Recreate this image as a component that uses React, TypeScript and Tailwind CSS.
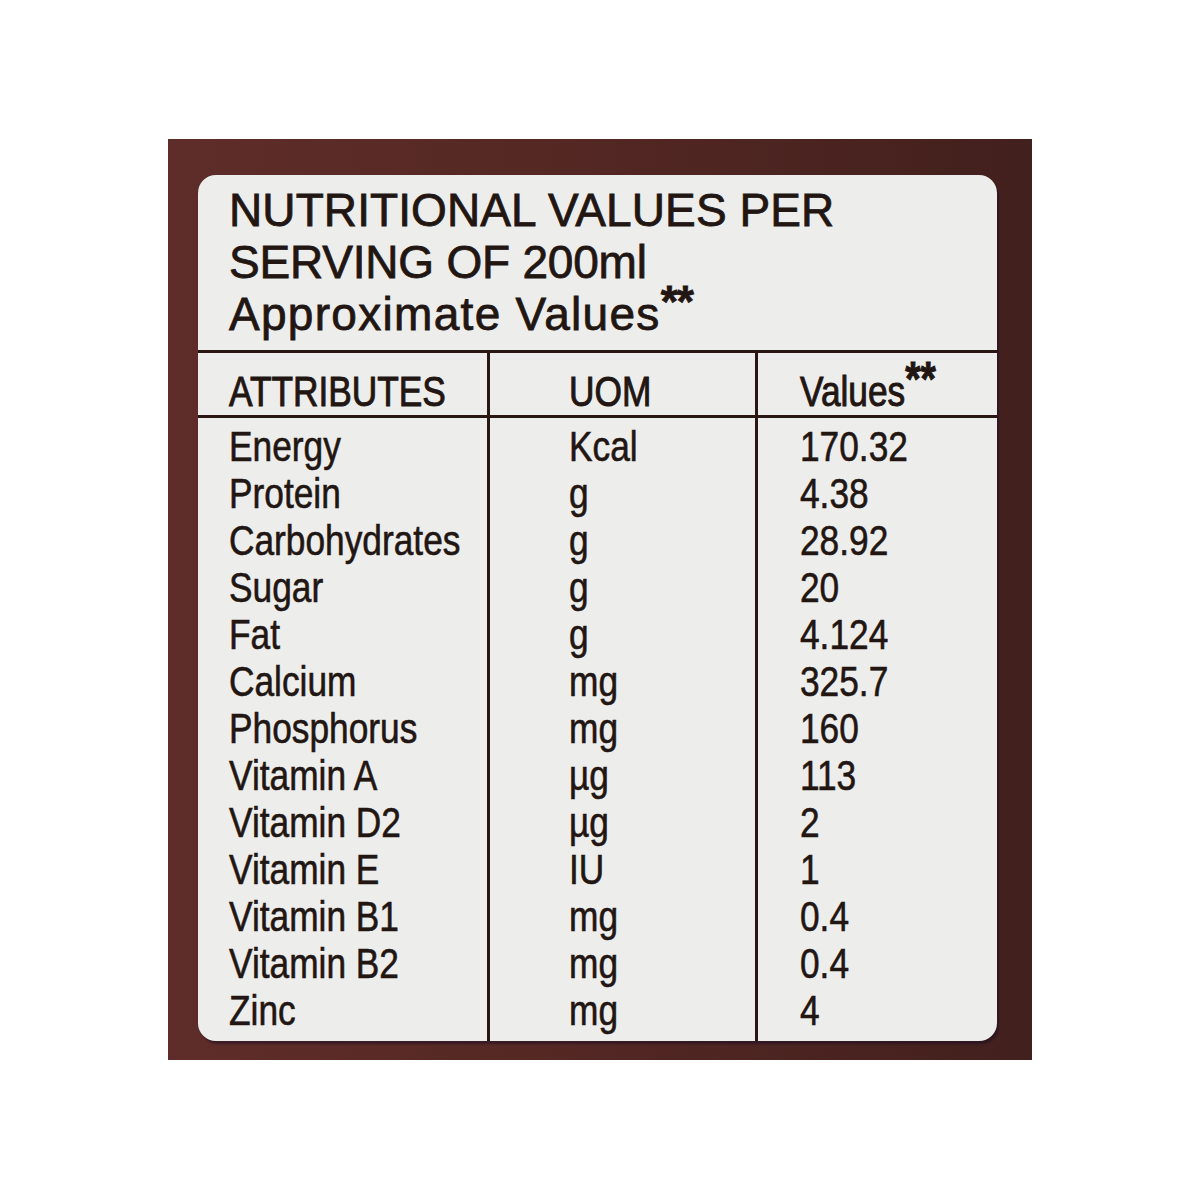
const rows = [
  ["Energy", "Kcal", "170.32"],
  ["Protein", "g", "4.38"],
  ["Carbohydrates", "g", "28.92"],
  ["Sugar", "g", "20"],
  ["Fat", "g", "4.124"],
  ["Calcium", "mg", "325.7"],
  ["Phosphorus", "mg", "160"],
  ["Vitamin A", "µg", "113"],
  ["Vitamin D2", "µg", "2"],
  ["Vitamin E", "IU", "1"],
  ["Vitamin B1", "mg", "0.4"],
  ["Vitamin B2", "mg", "0.4"],
  ["Zinc", "mg", "4"],
]

// no narrow face installed, so the table text is squeezed horizontally
function Column({
  title,
  values,
  className,
  padClass,
}: {
  title: React.ReactNode
  values: string[]
  className: string
  padClass: string
}) {
  return (
    <div className={`flex flex-col ${className}`}>
      <div className={`h-[65px] border-b-[3px] border-[#2a1714] pt-[15px] text-[43px] leading-[46px] ${padClass}`}>
        <div className="origin-left scale-x-[0.82] whitespace-nowrap [-webkit-text-stroke:1px_#221613]">{title}</div>
      </div>
      <div className={`pt-[5px] text-[42px] leading-[47px] ${padClass}`}>
        {values.map((v, i) => (
          <div key={i} className="origin-left scale-x-[0.84] whitespace-nowrap [-webkit-text-stroke:0.6px_#221613]">
            {v}
          </div>
        ))}
      </div>
    </div>
  )
}

export default function App() {
  return (
    <div className="min-h-[1200px] bg-white flex justify-center pt-[139px]">
      <div className="w-[864px] h-[921px] bg-gradient-to-r from-[#5f2d29] via-[#532723] to-[#42201d] pt-[36px] pl-[30px]">
        <div className="w-[799px] h-[866px] rounded-[18px] bg-[#ededeb] overflow-hidden flex flex-col text-[#221613] font-['Liberation_Sans',Arial,sans-serif] shadow-[2px_3px_2px_rgba(20,10,40,0.45)]">
          <div className="pl-[31px] pt-[9px] text-[46px] leading-[52px] [-webkit-text-stroke:0.8px_#221613]">
            <div className="tracking-[0.1px]">NUTRITIONAL VALUES PER</div>
            <div className="tracking-[-0.2px]">SERVING OF 200ml</div>
            <div className="tracking-[1.3px]">
              Approximate Values
              <span className="relative -top-[13px] text-[44px] font-bold leading-[0px] tracking-[-1px]">**</span>
            </div>
          </div>
          <div className="mt-[10px] border-t-[3px] border-[#2a1714] flex-1 grid grid-cols-[292px_268px_1fr]">
            <Column
              title="ATTRIBUTES"
              values={rows.map((r) => r[0])}
              className="border-r-[3px] border-[#2a1714]"
              padClass="pl-[31px]"
            />
            <Column
              title="UOM"
              values={rows.map((r) => r[1])}
              className="border-r-[3px] border-[#2a1714]"
              padClass="pl-[79px]"
            />
            <Column
              title={
                <>
                  Values
                  <span className="relative -top-[11px] text-[48px] font-bold leading-[0px]">**</span>
                </>
              }
              values={rows.map((r) => r[2])}
              className=""
              padClass="pl-[42px]"
            />
          </div>
        </div>
      </div>
    </div>
  )
}
